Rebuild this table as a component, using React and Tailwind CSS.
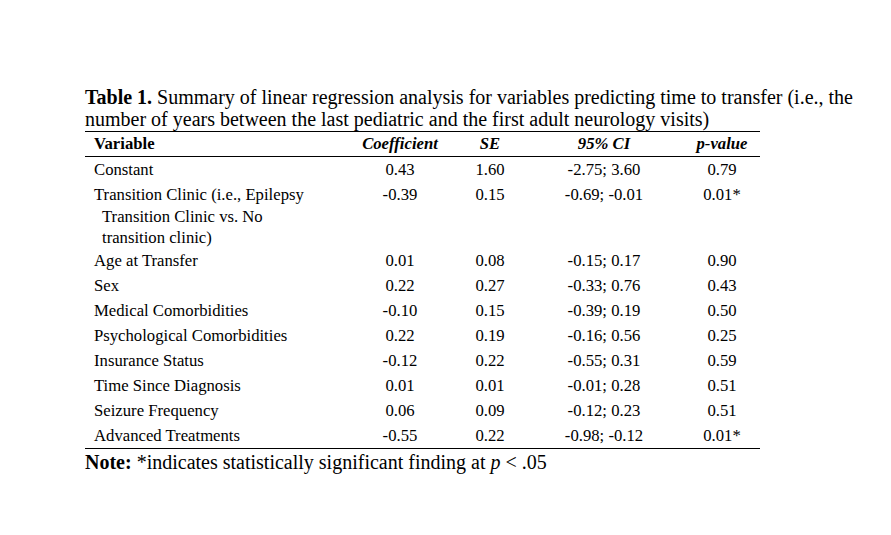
const rows = [
  { v: 'Constant', c: '0.43', se: '1.60', ci: '-2.75; 3.60', p: '0.79' },
  { v: ['Transition Clinic (i.e., Epilepsy', 'Transition Clinic vs. No', 'transition clinic)'], c: '-0.39', se: '0.15', ci: '-0.69; -0.01', p: '0.01*' },
  { v: 'Age at Transfer', c: '0.01', se: '0.08', ci: '-0.15; 0.17', p: '0.90' },
  { v: 'Sex', c: '0.22', se: '0.27', ci: '-0.33; 0.76', p: '0.43' },
  { v: 'Medical Comorbidities', c: '-0.10', se: '0.15', ci: '-0.39; 0.19', p: '0.50' },
  { v: 'Psychological Comorbidities', c: '0.22', se: '0.19', ci: '-0.16; 0.56', p: '0.25' },
  { v: 'Insurance Status', c: '-0.12', se: '0.22', ci: '-0.55; 0.31', p: '0.59' },
  { v: 'Time Since Diagnosis', c: '0.01', se: '0.01', ci: '-0.01; 0.28', p: '0.51' },
  { v: 'Seizure Frequency', c: '0.06', se: '0.09', ci: '-0.12; 0.23', p: '0.51' },
  { v: 'Advanced Treatments', c: '-0.55', se: '0.22', ci: '-0.98; -0.12', p: '0.01*' },
];

const grid = 'grid grid-cols-[275px_80px_100px_144px_76px]';

export default function App() {
  return (
    <div className="min-h-[535px] w-[891px] bg-white text-black pl-[85px] pt-[86px]" style={{ fontFamily: '"Liberation Serif", "Times New Roman", serif' }}>
      {/* Caption */}
      <p className="text-[20px] leading-[22px] whitespace-nowrap">
        <b>Table 1.</b> Summary of linear regression analysis for variables predicting time to transfer (i.e., the
        <br />
        number of years between the last pediatric and the first adult neurology visits)
      </p>

      {/* Table */}
      <div className="w-[675px] border-t border-b border-black mt-[1px] text-[16.7px]">
        <div className={`${grid} h-[25px] items-center border-b border-black font-bold leading-[22px]`}>
          <div className="pl-[9px]">Variable</div>
          <div className="text-center italic">Coefficient</div>
          <div className="text-center italic">SE</div>
          <div className="text-center italic pr-[16px]">95% CI</div>
          <div className="text-center italic">p-value</div>
        </div>
        {rows.map((r, i) => {
          const multi = Array.isArray(r.v);
          return (
            <div key={i} className={`${grid} ${multi ? 'h-[66px] pt-[2px] leading-[21.5px]' : 'h-[25px] leading-[25px]'}`}>
              <div className="pl-[17px] -indent-2">
                {multi ? r.v.map((l, j) => <div key={j} className={j === 0 ? '' : 'indent-0'}>{l}</div>) : r.v}
              </div>
              <div className="text-center">{r.c}</div>
              <div className="text-center">{r.se}</div>
              <div className="text-center pr-[16px]">{r.ci}</div>
              <div className="text-center">{r.p}</div>
            </div>
          );
        })}
      </div>

      {/* Note */}
      <p className="text-[20px] leading-[26px] whitespace-nowrap">
        <b>Note:</b> *indicates statistically significant finding at <i>p</i> &lt; .05
      </p>
    </div>
  );
}
